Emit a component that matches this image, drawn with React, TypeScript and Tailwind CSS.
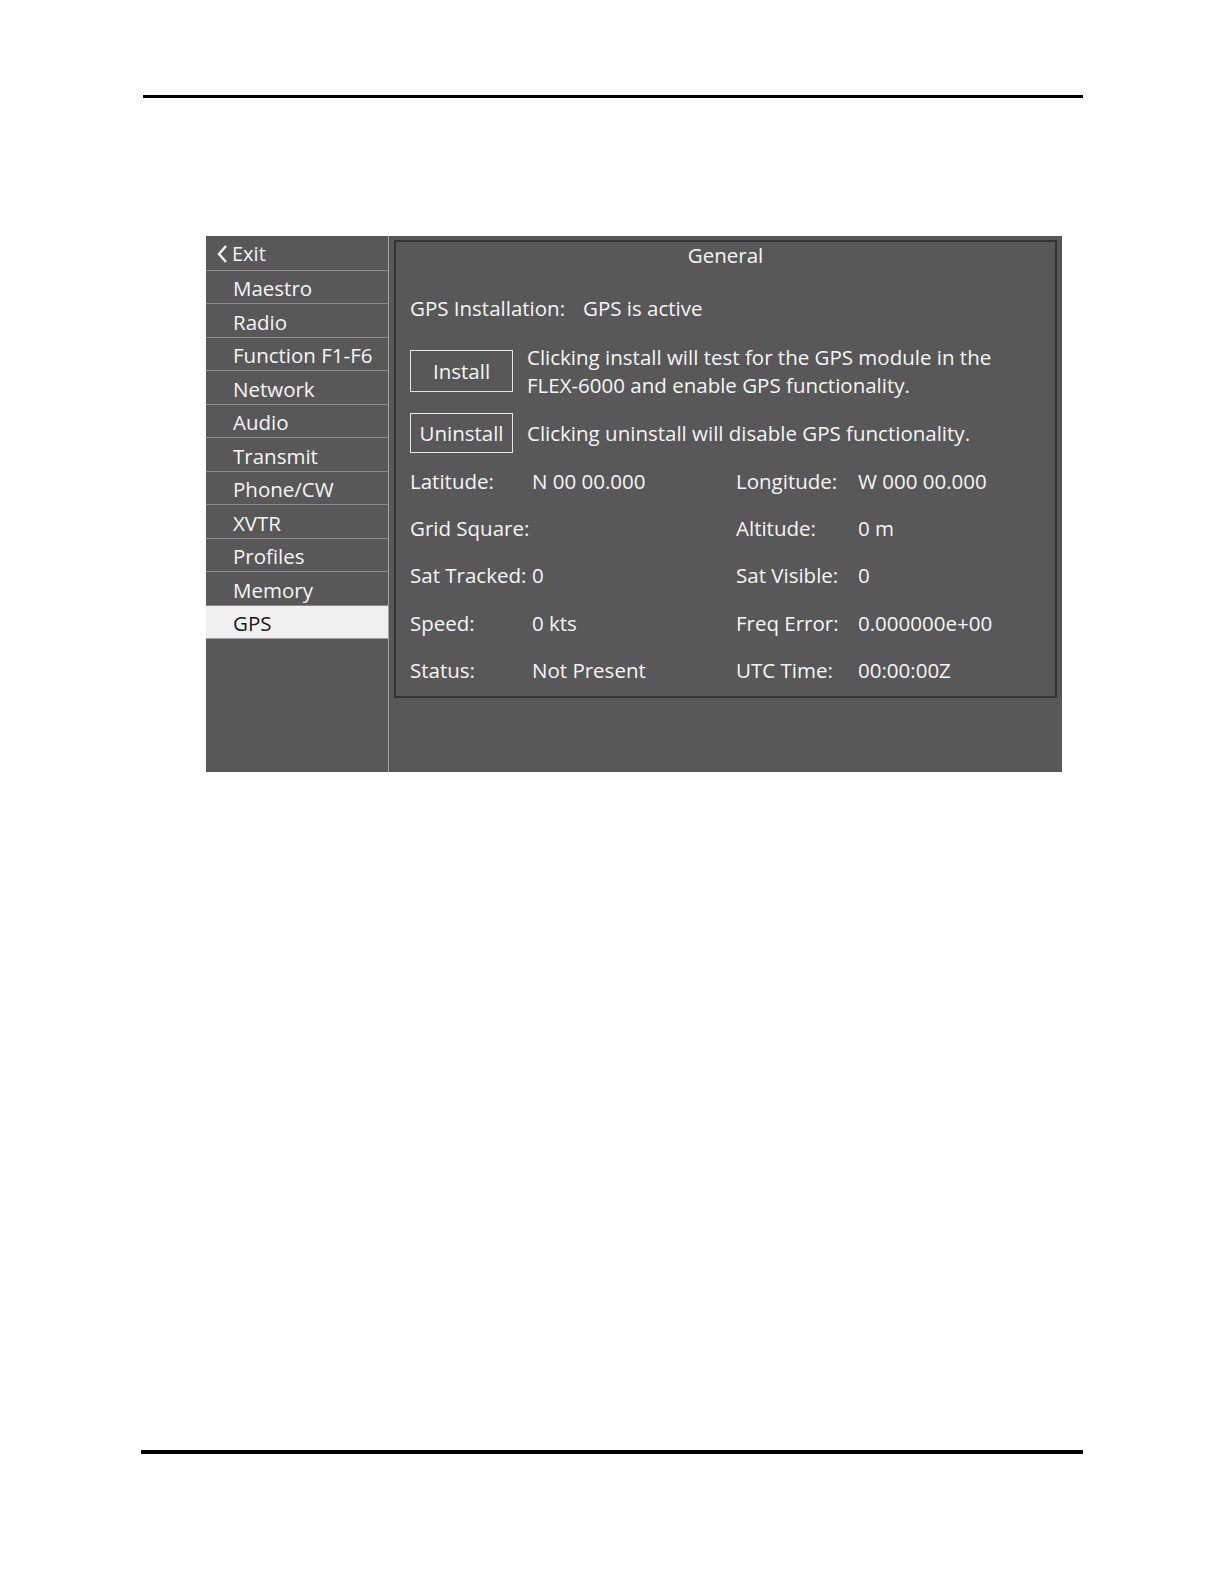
import React from "react";

const menu = [
	"Maestro",
	"Radio",
	"Function F1-F6",
	"Network",
	"Audio",
	"Transmit",
	"Phone/CW",
	"XVTR",
	"Profiles",
	"Memory",
	"GPS",
];

const rows: [string, string, string, string][] = [
	["Latitude:", "N 00 00.000", "Longitude:", "W 000 00.000"],
	["Grid Square:", "", "Altitude:", "0 m"],
	["Sat Tracked:", "0", "Sat Visible:", "0"],
	["Speed:", "0 kts", "Freq Error:", "0.000000e+00"],
	["Status:", "Not Present", "UTC Time:", "00:00:00Z"],
];

function Sidebar() {
	return (
		<div className="w-[183px] shrink-0 border-r border-[#a0a0a0] bg-[#585858]">
			<div className="flex h-[34.5px] items-center gap-[2px] border-b border-[#8c8c8c] pl-[10px] pt-[2px]">
				<svg width="14" height="20" viewBox="0 0 14 20" fill="none">
					<path d="M10 2 L3 10 L10 18" stroke="#f5f5f5" strokeWidth="2.4" />
				</svg>
				<span className="text-[20px] text-[#f5f5f5]">Exit</span>
			</div>
			{menu.map((item) => {
				const active = item === "GPS";
				return (
					<div
						key={item}
						className={
							active
								? "flex h-[33.5px] items-center border-b border-[#a0a0a0] bg-[#f0f0f0] pl-[27px] pt-[4px] text-[20.5px] text-[#1a1a1a]"
								: "flex h-[33.5px] items-center border-b border-[#8c8c8c] pl-[27px] pt-[4px] text-[20.5px] text-[#f5f5f5]"
						}
					>
						{item}
					</div>
				);
			})}
		</div>
	);
}

function GpsPanel() {
	return (
		<div className="flex-1 px-[5px] pt-[4px]">
			<div className="h-[458px] border-2 border-[#333333] pl-[14px] text-[20.5px] leading-[28px] text-[#f5f5f5]">
				<div className="flex h-[26px] items-center justify-center pr-[14px]">General</div>
				<div className="mt-[26px] flex h-[28px] items-center">
					<span className="w-[173px]">GPS Installation:</span>
					<span>GPS is active</span>
				</div>
				<div className="mt-[21px] flex h-[56px] items-center">
					<button className="h-[42px] w-[103px] shrink-0 border border-[#e6e6e6] text-[20.5px]">
						Install
					</button>
					<p className="ml-[14px]">
						Clicking install will test for the GPS module in the
						<br />
						FLEX-6000 and enable GPS functionality.
					</p>
				</div>
				<div className="mt-[14px] flex h-[40px] items-center">
					<button className="h-[40px] w-[103px] shrink-0 border border-[#e6e6e6] text-[20.5px]">
						Uninstall
					</button>
					<p className="ml-[14px]">Clicking uninstall will disable GPS functionality.</p>
				</div>
				<div className="mt-[4px]">
					{rows.map(([l1, v1, l2, v2]) => (
						<div key={l1} className="flex h-[47.3px] items-center">
							<span className="w-[122px]">{l1}</span>
							<span className="w-[204px]">{v1}</span>
							<span className="w-[122px]">{l2}</span>
							<span>{v2}</span>
						</div>
					))}
				</div>
			</div>
		</div>
	);
}

export default function App() {
	return (
		<div className="h-[1584px] w-[1224px] overflow-hidden bg-[#fefefe] pt-[95px] font-['Open_Sans',sans-serif]">
			<div className="ml-[143px] h-[3px] w-[940px] bg-black" />
			<div className="ml-[206px] mt-[138px] flex h-[536px] w-[856px] bg-[#585858]">
				<Sidebar />
				<GpsPanel />
			</div>
			<div className="ml-[141px] mt-[678px] h-[4px] w-[942px] bg-black" />
		</div>
	);
}
